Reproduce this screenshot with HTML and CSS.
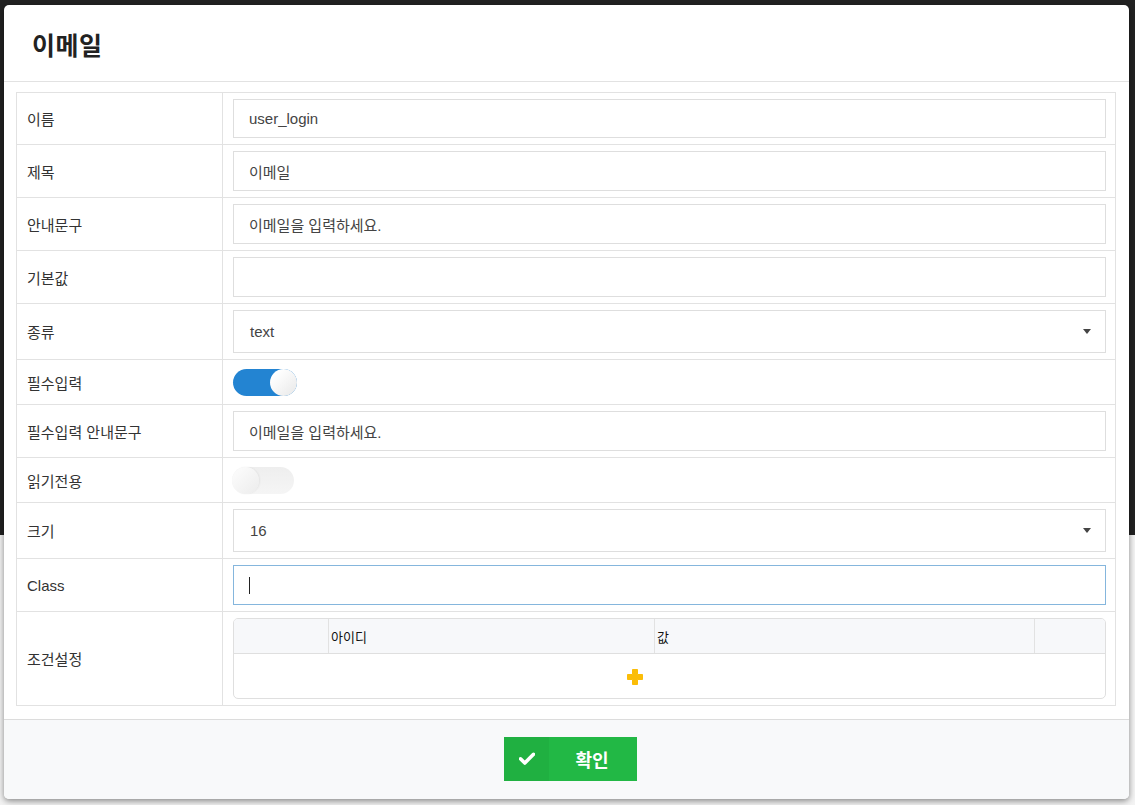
FILE: index.html
```html
<!DOCTYPE html>
<html lang="ko">
<head>
<meta charset="utf-8">
<title>이메일</title>
<link rel="stylesheet" href="styles.css">
</head>
<body>
<div class="backdrop">
  <div class="modal">
    <div class="modal-header"><h2 class="modal-title">이메일</h2></div>
    <div class="modal-body">
      <table class="form-table">
        <tr class="row-input first">
          <th>이름</th>
          <td><div class="field">user_login</div></td>
        </tr>
        <tr class="row-input">
          <th>제목</th>
          <td><div class="field">이메일</div></td>
        </tr>
        <tr class="row-input">
          <th>안내문구</th>
          <td><div class="field">이메일을 입력하세요.</div></td>
        </tr>
        <tr class="row-input">
          <th>기본값</th>
          <td><div class="field"></div></td>
        </tr>
        <tr class="row-input row-select">
          <th>종류</th>
          <td><div class="field select">text<span class="caret"></span></div></td>
        </tr>
        <tr class="row-toggle">
          <th>필수입력</th>
          <td><div class="toggle on"><span class="knob"></span></div></td>
        </tr>
        <tr class="row-input">
          <th>필수입력 안내문구</th>
          <td><div class="field">이메일을 입력하세요.</div></td>
        </tr>
        <tr class="row-toggle">
          <th>읽기전용</th>
          <td><div class="toggle off"><span class="knob"></span></div></td>
        </tr>
        <tr class="row-input row-select">
          <th>크기</th>
          <td><div class="field select">16<span class="caret"></span></div></td>
        </tr>
        <tr class="row-input">
          <th>Class</th>
          <td><div class="field focus"><span class="cursor"></span></div></td>
        </tr>
        <tr class="row-cond">
          <th>조건설정</th>
          <td>
            <div class="cond">
              <div class="cond-head">
                <div class="c1"></div>
                <div class="c2">아이디</div>
                <div class="c3">값</div>
                <div class="c4"></div>
              </div>
              <div class="cond-body">
                <div class="add-wrap">
                  <svg class="plus" width="18" height="18" viewBox="0 0 18 18"><path d="M6.5 1.5h5v5h5v5h-5v5h-5v-5h-5v-5h5z" fill="#fbbd08" stroke="#fbbd08" stroke-linejoin="round" stroke-width="1"/></svg>
                </div>
              </div>
            </div>
          </td>
        </tr>
      </table>
    </div>
    <div class="modal-footer">
      <button class="btn-ok" type="button">
        <span class="btn-icon"><svg width="16" height="13" viewBox="0 0 16 13"><path d="M1.5 6.8 L5.8 11 L14.5 2.3" fill="none" stroke="#fff" stroke-width="3.6" stroke-linecap="round" stroke-linejoin="round"/></svg></span>
        <span class="btn-text">확인</span>
      </button>
    </div>
  </div>
</div>
</body>
</html>
```

FILE: styles.css
```css
* { box-sizing: border-box; }
html, body { margin: 0; padding: 0; }
body {
  width: 1135px;
  height: 805px;
  overflow: hidden;
  background: linear-gradient(#222 0, #222 535px, #f3f3f3 535px, #f3f3f3 100%);
  font-family: "Liberation Sans", "Noto Sans CJK KR", sans-serif;
  color: #333;
}
.backdrop {
  padding: 5px 0 0 4px;
}
.modal {
  width: 1125px;
  height: 794px;
  background: #fff;
  border-radius: 5px;
  box-shadow: 0 2px 6px rgba(0,0,0,0.45);
  display: flex;
  flex-direction: column;
  overflow: hidden;
}
.modal-header {
  height: 77px;
  border-bottom: 1px solid #e2e2e2;
  display: flex;
  align-items: center;
  padding-left: 28px;
  padding-top: 2px;
}
.modal-title {
  margin: 0;
  font-family: "Noto Sans CJK KR", sans-serif;
  font-size: 25px;
  font-weight: 700;
  color: #222;
  letter-spacing: 0.5px;
}
.modal-body {
  padding: 10px 13px 13px 12px;
  flex: 1;
}
.form-table {
  width: 1100px;
  border-collapse: collapse;
  border: 1px solid #e2e2e2;
}
.form-table th, .form-table td {
  border: 1px solid #e2e2e2;
}
.form-table th {
  width: 206px;
  text-align: left;
  font-weight: 400;
  font-size: 15px;
  color: #333;
  padding: 0 0 0 10px;
  font-family: "Liberation Sans", "Noto Sans CJK KR", sans-serif;
}
.form-table td {
  padding: 6px 9px 6px 10px;
}
.row-input td { height: 53px; }
.row-input.first td { height: 52px; }
.row-select td { height: 56px; }
.row-toggle td { height: 45px; padding-top: 8px; padding-bottom: 8px; }
.row-cond td { height: 94px; padding-top: 6px; padding-bottom: 6px; }
.field {
  height: 40px;
  border: 1px solid #dedede;
  background: #fff;
  padding: 0 15px;
  font-size: 15px;
  color: #444;
  display: flex;
  align-items: center;
  font-family: "Liberation Sans", "Noto Sans CJK KR", sans-serif;
}
.row-input.first .field { height: 39px; }
.field.select {
  height: 43px;
  justify-content: space-between;
  padding-left: 16px;
  padding-right: 14px;
}
.caret {
  width: 0;
  height: 0;
  border-left: 4.5px solid transparent;
  border-right: 4.5px solid transparent;
  border-top: 5px solid #444;
}
.field.focus {
  border-color: #85b6dd;
}
.cursor {
  display: inline-block;
  width: 1px;
  height: 17px;
  background: #222;
}
.toggle {
  width: 64px;
  height: 27px;
  border-radius: 14px;
  position: relative;
}
.toggle.on {
  background: #2384d2;
}
.toggle.off {
  width: 62px;
  margin-left: -1px;
  background: linear-gradient(#eeeeee, #f5f5f5);
}
.knob {
  position: absolute;
  top: 0;
  width: 27px;
  height: 27px;
  border-radius: 50%;
  background: linear-gradient(135deg, #ffffff 20%, #e8e8e8 100%);
}
.toggle.on .knob { right: 0; }
.toggle.off .knob {
  left: 0;
  background: linear-gradient(135deg, #fafafa 20%, #ececec 100%);
  box-shadow: 1px 0 2px rgba(0,0,0,0.06);
}
.cond {
  border: 1px solid #dfdfdf;
  border-radius: 5px;
  overflow: hidden;
  height: 81px;
  display: flex;
  flex-direction: column;
}
.cond-head {
  display: flex;
  height: 35px;
  background: #f7f8fa;
  border-bottom: 1px solid #dfdfdf;
  font-size: 13px;
  color: #111;
  font-family: "Noto Sans CJK KR", sans-serif;
  font-weight: 400;
}
.cond-head > div {
  display: flex;
  align-items: center;
  padding-left: 2px;
}
.cond-head .c1 { width: 95px; border-right: 1px solid #e2e2e2; }
.cond-head .c2 { width: 326px; border-right: 1px solid #e2e2e2; }
.cond-head .c3 { width: 380px; border-right: 1px solid #e2e2e2; }
.cond-head .c4 { flex: 1; }
.cond-body {
  flex: 1;
  display: flex;
  align-items: center;
}
.add-wrap {
  width: 801px;
  display: flex;
  justify-content: center;
  padding-top: 1px;
}
.plus { display: block; }
.modal-footer {
  height: 80px;
  background: #f8f9fa;
  border-top: 1px solid #dcdcdc;
  display: flex;
  justify-content: center;
  align-items: center;
  padding-left: 8px;
  padding-bottom: 2px;
}
.btn-ok {
  display: flex;
  width: 133px;
  height: 44px;
  border: 0;
  padding: 0;
  background: #22b845;
  cursor: pointer;
  font-family: "Noto Sans CJK KR", sans-serif;
}
.btn-icon {
  width: 45px;
  height: 100%;
  background: #20b041;
  display: flex;
  align-items: center;
  justify-content: center;
}
.btn-text {
  flex: 1;
  display: flex;
  align-items: center;
  justify-content: center;
  color: #fff;
  font-size: 18px;
  font-weight: 700;
  padding-right: 2px;
}
```
